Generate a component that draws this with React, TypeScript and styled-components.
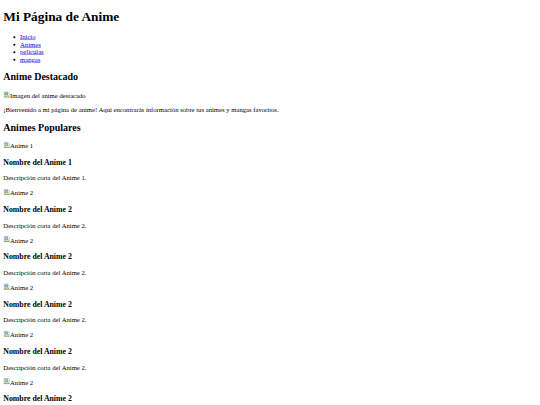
import React from 'react';
import styled, { createGlobalStyle } from 'styled-components';

// the reference is the plain browser-default page, photographed at 5/12 scale
const GlobalStyle = createGlobalStyle`
  html {
    background: #fff;
    overflow: hidden;
  }
  body {
    margin: 0;
  }
`;

const Page = styled.div`
  display: flow-root;
  width: 1296px;
  padding: 0 8px;
  box-sizing: border-box;
  transform: scale(0.41667);
  transform-origin: 0 0;
  font-family: "Liberation Serif", "Times New Roman", serif;
  font-size: 16px;
  color: #000;
`;

const Title = styled.h1`
  font-size: 32px;
  font-weight: bold;
  margin: 21.44px 0;
`;

const NavList = styled.ul`
  margin: 16px 0;
  padding-left: 40px;
  list-style: disc;
`;

const NavLink = styled.a`
  color: #0000ee;
  text-decoration: underline;
`;

const SectionTitle = styled.h2`
  font-size: 24px;
  font-weight: bold;
  margin: 19.92px 0;
`;

const ItemTitle = styled.h3`
  font-size: 18.72px;
  font-weight: bold;
  margin: 18.72px 0;
`;

const Text = styled.p`
  margin: 16px 0;
`;

const Picture = styled.span`
  display: inline;
  color: #000;
`;

// broken-image glyph sits on the text baseline, as the browser draws it
const BrokenIcon = styled.svg`
  width: 16px;
  height: 16px;
  vertical-align: baseline;
`;

function BrokenImage({ alt }: { alt: string }) {
  return (
    <Picture>
      <BrokenIcon viewBox="0 0 16 16">
        <path d="M1.5 1.5h10l3 3v4l-2 1.5-2-1.5-2 1.5-2-1.5-2 1.5-3-1.5z" fill="#eef3f8" stroke="#999" />
        <path d="M2 1.8h9.3v4.5H2z" fill="#8fb5e0" />
        <path d="M2 8.5l2.5-2.5 2 2 2.5-3 2.8 3.4v0.5l-1.6 1.1-2-1.5-2 1.5-2-1.5-2 1.5z" fill="#6fae4f" />
        <path d="M1.5 11l3 1.5 2-1.5 2 1.5 2-1.5 2 1.5 2-1.5v3.5h-13z" fill="#eef3f8" stroke="#999" />
        <path d="M2 14.5v-1.5l3-1 3 1.5 4-1.5 2 1v1.5z" fill="#6fae4f" />
      </BrokenIcon>
      {alt}
    </Picture>
  );
}

const popular = [
  { img: 'Anime 1', name: 'Nombre del Anime 1', desc: 'Descripción corta del Anime 1.' },
  { img: 'Anime 2', name: 'Nombre del Anime 2', desc: 'Descripción corta del Anime 2.' },
  { img: 'Anime 2', name: 'Nombre del Anime 2', desc: 'Descripción corta del Anime 2.' },
  { img: 'Anime 2', name: 'Nombre del Anime 2', desc: 'Descripción corta del Anime 2.' },
  { img: 'Anime 2', name: 'Nombre del Anime 2', desc: 'Descripción corta del Anime 2.' },
  { img: 'Anime 2', name: 'Nombre del Anime 2', desc: 'Descripción corta del Anime 2.' },
  { img: 'Anime 2', name: 'Nombre del Anime 2', desc: 'Descripción corta del Anime 2.' },
];

export default function App() {
  return (
    <Page>
      <GlobalStyle />
      <header>
        <Title>Mi Página de Anime</Title>
        <nav>
          <NavList>
            <li><NavLink href="#">Inicio</NavLink></li>
            <li><NavLink href="#">Animes</NavLink></li>
            <li><NavLink href="#">peliculas</NavLink></li>
            <li><NavLink href="#">mangas</NavLink></li>
          </NavList>
        </nav>
      </header>
      <section>
        <SectionTitle>Anime Destacado</SectionTitle>
        <BrokenImage alt="Imagen del anime destacado" />
        <Text>¡Bienvenido a mi página de anime! Aquí encontrarás información sobre tus animes y mangas favoritos.</Text>
      </section>
      <section>
        <SectionTitle>Animes Populares</SectionTitle>
        {popular.map((a, i) => (
          <article key={i}>
            <BrokenImage alt={a.img} />
            <ItemTitle>{a.name}</ItemTitle>
            <Text>{a.desc}</Text>
          </article>
        ))}
      </section>
    </Page>
  );
}
